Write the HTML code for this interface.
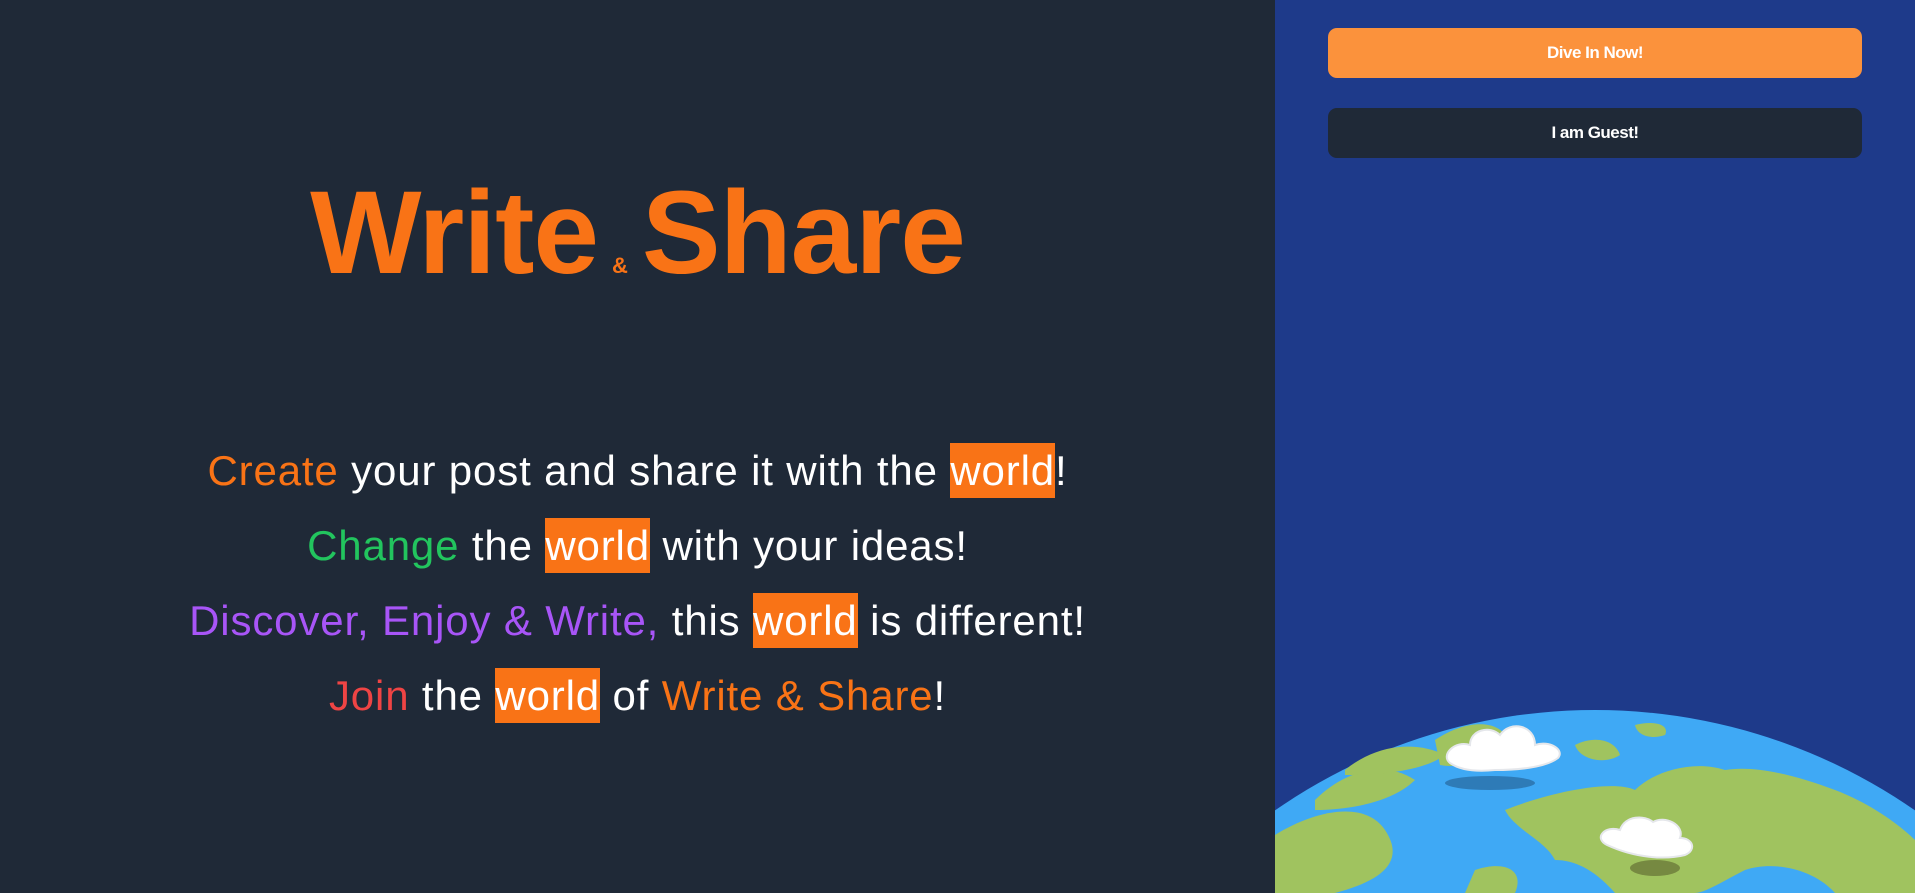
<!DOCTYPE html>
<html><head><meta charset="utf-8"><style>
*{margin:0;padding:0;box-sizing:border-box}
html,body{width:1915px;height:893px;overflow:hidden;background:#1f2937;font-family:"Liberation Sans",sans-serif}
.left{position:absolute;left:0;top:0;width:1275px;height:893px;background:#1f2937;overflow:hidden}
.right{position:absolute;left:1275px;top:0;width:640px;height:893px;background:#1e3a8a;overflow:hidden}
h1{position:absolute;left:0;width:1275px;top:163px;text-align:center;color:#f97316;font-size:118px;font-weight:bold;letter-spacing:-1px;line-height:140px;white-space:nowrap}
h1 small{font-size:22px;letter-spacing:0;margin:0 14px}
.lines{position:absolute;left:0;width:1275px;top:433px;text-align:center;color:#fff;font-size:42px;line-height:75px;letter-spacing:0.85px;white-space:nowrap}
.w{background:#f97316;padding:4px 0}
.o{color:#f97316}.g{color:#22c55e}.p{color:#a855f7}.r{color:#ef4444}
.btn{position:absolute;left:53px;width:534px;height:50px;border-radius:9px;color:#fff;font-weight:bold;font-size:17px;text-align:center;line-height:50px;letter-spacing:-0.5px}
</style></head><body>
<div class="left">
<h1>Write<small>&amp;</small>Share</h1>
<div class="lines">
<div><span class="o">Create</span> your post and share it with the <span class="w">world</span>!</div>
<div><span class="g">Change</span> the <span class="w">world</span> with your ideas!</div>
<div><span class="p">Discover, Enjoy &amp; Write,</span> this <span class="w">world</span> is different!</div>
<div><span class="r">Join</span> the <span class="w">world</span> of <span class="o">Write &amp; Share</span>!</div>
</div>
</div>
<div class="right">
<div class="btn" style="top:28px;background:#fb923c">Dive In Now!</div>
<div class="btn" style="top:108px;background:#1f2937">I am Guest!</div>
<svg width="640" height="893" style="position:absolute;left:0;top:0">
<circle cx="320" cy="1270" r="560" fill="#3fa9f5"/>
<g fill="#a0c35f">
<path d="M0 835 C40 810 90 800 110 830 C130 860 110 880 60 893 L0 893Z"/>
<path d="M40 800 C70 770 110 760 140 780 C120 800 80 810 40 810Z"/>
<path d="M70 770 C100 745 140 740 170 755 C150 770 110 775 70 775Z"/>
<path d="M160 740 C190 720 220 720 230 735 C215 755 190 770 165 765Z"/>
<path d="M200 870 C230 860 250 870 240 893 L190 893Z"/>
<path d="M230 810 C280 790 340 780 360 790 C380 770 420 760 450 770 C480 765 520 775 560 790 C600 805 630 830 640 840 L640 893 L560 893 C540 870 500 860 470 870 C450 880 430 893 420 893 L340 893 C320 870 300 860 280 860 C270 840 240 830 230 810Z"/>
<path d="M300 745 C320 735 340 740 345 755 C330 765 305 760 300 745Z"/>
<path d="M360 725 C380 720 395 725 390 735 C375 740 362 735 360 725Z"/>
</g>
<ellipse cx="215" cy="783" rx="45" ry="7" fill="#2a6fa8" opacity=".8"/>
<g fill="#fff" stroke="#e5e7eb" stroke-width="2">
<path d="M175 763 C165 755 180 740 195 745 C195 730 215 725 225 735 C235 720 260 725 260 745 C275 740 290 750 283 758 C270 768 240 770 220 770 C200 772 185 770 175 763Z"/>
<path d="M332 845 C318 838 330 825 345 830 C350 815 370 815 378 822 C390 815 410 825 405 838 C418 838 422 850 410 855 C390 860 360 858 332 845Z"/>
</g>
<ellipse cx="380" cy="868" rx="25" ry="8" fill="#6b7a3a" opacity=".8"/>
</svg>
</div>
</body></html>
